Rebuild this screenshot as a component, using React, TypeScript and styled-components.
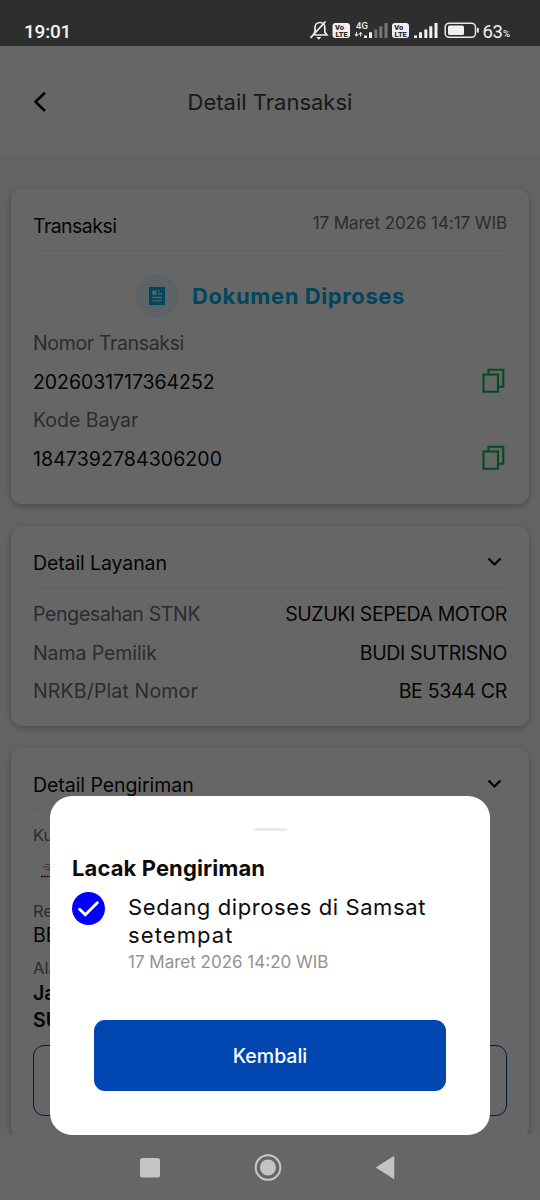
import React from "react";
import styled, { createGlobalStyle } from "styled-components";

const Global = createGlobalStyle`
  * { box-sizing: border-box; }
  body { margin: 0; background: #666; }
`;

const Screen = styled.div`
  position: relative;
  display: flex;
  flex-direction: column;
  width: 540px;
  height: 1200px;
  overflow: hidden;
  font-family: Inter, "Liberation Sans", sans-serif;
  color: #000;
`;

const StatusBar = styled.div`
  display: flex;
  align-items: center;
  justify-content: space-between;
  flex: none;
  height: 46px;
  padding: 14px 29px 0 24px;
  background: #2e2e2e;
  color: #f2f2f2;
  font-family: Roboto, sans-serif;
`;

const Clock = styled.span`
  padding-top: 3px;
  font-size: 19px;
  font-weight: 500;
  line-height: 30px;
  letter-spacing: -0.2px;
`;

const AppArea = styled.div`
  position: relative;
  flex: none;
  display: flex;
  flex-direction: column;
  height: 1089px;
  overflow: hidden;
  background: #f8f8f8;
`;

const Header = styled.header`
  display: grid;
  grid-template-columns: 40px 1fr 40px;
  align-items: center;
  flex: none;
  height: 109px;
  padding: 2px 20px 0;
  background: #fff;
  text-align: center;
`;

const Content = styled.main`
  display: flex;
  flex-direction: column;
  flex: none;
  gap: 22px;
  padding: 34px 11px 0;
`;

const Card = styled.section<{ $height: number }>`
  flex: none;
  height: ${(p) => p.$height}px;
  padding: 0 22px;
  border-radius: 11px;
  background: #fff;
  box-shadow: 0 2px 6px rgba(0, 0, 0, 0.26);
`;

const CardHead = styled.div`
  display: flex;
  align-items: center;
  justify-content: space-between;
  height: 62px;
  padding-top: 13px;
  border-bottom: 1px solid #ebebeb;

  svg {
    margin-bottom: 2px;
  }
`;

const DateText = styled.span`
  padding-bottom: 6px;
  font-size: 17px;
  line-height: 26px;
  letter-spacing: -0.07px;
  color: #6c6e75;
`;

const Row = styled.div`
  display: flex;
  align-items: center;
  justify-content: space-between;
  height: 38.5px;

  svg {
    margin-bottom: 2px;
  }
`;

const Status = styled.div`
  display: flex;
  align-items: center;
  justify-content: center;
  gap: 13px;
  height: 73px;
  padding-top: 16px;
`;

const StatusIcon = styled.span`
  display: grid;
  place-items: center;
  width: 44px;
  height: 44px;
  border-radius: 50%;
  background: #e6f4fc;
`;

const Rows = styled.div`
  padding-top: 7px;
`;

const Text = styled.span<{ $size?: number; $ls?: number; $weight?: number; $color?: string; $lh?: number }>`
  font-size: ${(p) => p.$size ?? 19.5}px;
  font-weight: ${(p) => p.$weight ?? 400};
  letter-spacing: ${(p) => p.$ls ?? 0}px;
  color: ${(p) => p.$color ?? "#0c0c0c"};
  line-height: ${(p) => p.$lh ?? 26}px;
  white-space: nowrap;
`;

const Delivery = styled.div`
  display: flex;
  flex-direction: column;
  align-items: flex-start;
  padding-top: 12px;
`;

const Courier = styled.div`
  height: 51px;
  padding: 13px 0 0 7px;
`;

const AddressLabel = styled.span`
  margin-top: 9px;
  font-size: 16.5px;
  line-height: 24px;
  color: #6c6e75;
`;

const OutlineButton = styled.div`
  align-self: stretch;
  height: 71px;
  margin-top: 11px;
  border: 1.5px solid #0046b0;
  border-radius: 11px;
`;

const Overlay = styled.div`
  position: absolute;
  inset: 0;
  display: flex;
  align-items: flex-end;
  justify-content: center;
  background: rgba(0, 0, 0, 0.6);
`;

const Sheet = styled.div`
  display: flex;
  flex-direction: column;
  width: 440px;
  height: 339px;
  padding: 32px 22px 0;
  border-radius: 22px;
  background: #fff;
`;

const Handle = styled.span`
  align-self: center;
  width: 33px;
  height: 3px;
  margin-bottom: 23px;
  border-radius: 1px;
  background: #ebebeb;
`;

const Step = styled.div`
  display: flex;
  align-items: flex-start;
  gap: 23px;
  margin-top: 10px;
`;

const StepText = styled.div`
  display: flex;
  flex-direction: column;
  padding-top: 2px;
`;

const PrimaryButton = styled.button`
  height: 71px;
  margin: 44px 22px 0;
  border: 0;
  border-radius: 11px;
  background: #0046b0;
  font-family: inherit;
`;

const NavBar = styled.nav`
  display: flex;
  align-items: center;
  flex: 1;
  background: #666;
`;

const muted = "#6c6e75";

const BackIcon = () => (
  <svg width="40" height="24" viewBox="0 0 40 24" fill="none" stroke="#000" strokeWidth="2.6">
    <path d="M25 2.800 15.500 11.800l9.500 9.200" strokeLinejoin="round" />
  </svg>
);

const Chevron = () => (
  <svg width="26" height="20" viewBox="0 0 26 20" fill="none" stroke="#000" strokeWidth="2.200">
    <path d="m7.500 6.500 6 6 6-6" />
  </svg>
);

const CopyIcon = () => (
  <svg width="26" height="26" viewBox="0 0 26 26" fill="none" stroke="#0cba5a" strokeWidth="2.100">
    <path d="M2.500 6.500h14.500v17.300h-14.500z" />
    <path d="M7.500 6.500V1.700h14.800v17h-5.300" />
  </svg>
);

const DocIcon = () => (
  <svg width="18" height="20" viewBox="0 0 18 20">
    <path fill="#00b0e6" d="M1 1h16v18H1z" />
    <path fill="#e6f4fc" d="M4.300 4.500h4.200v4.200H4.300zM10 4.500h1.500v1.500H10zM10 7.300h4v1.400h-4zM4.300 10.800h9.500v1.400H4.300zM4.300 14.200h9.500v1.400H4.300z" />
  </svg>
);

const CheckIcon = () => (
  <svg width="33" height="33" viewBox="0 0 33 33">
    <circle cx="16.500" cy="16.500" r="16.500" fill="#0000ff" />
    <path d="m7.600 17.300 5.700 5.500L25.300 10.800" fill="none" stroke="#fff" strokeWidth="2.900" strokeLinecap="round" />
  </svg>
);

const CourierLogo = () => (
  <svg width="40" height="18" viewBox="0 0 40 18">
    <path d="M2 6h10M5 3.500h7M5 8.500h7" stroke="#e8643a" strokeWidth="0.900" />
    <path d="M10 1.500h8L16 5h-6zM9 6.500h8l-2 3.500H9z" fill="#e8643a" />
    <path d="M1 15.500h24" stroke="#333" strokeWidth="1.600" strokeDasharray="2 .6" />
  </svg>
);

const StatusIcons = () => (
  <svg width="202" height="24" viewBox="308 18 202 24" fill="#f0f0f0" fontFamily="Roboto, sans-serif">
    <g fill="none" stroke="#f0f0f0" strokeWidth="1.700">
      <path d="M313.500 35h12.500l-2.200-2.800v-4.700c0-3-2-5-4.600-5-3 0-5.200 2-5.200 5v4.500l-1.500 2.200M309.500 37.800 324.500 21.500" />
    </g>
    <path d="M315.300 37h5l-2.500 2.800z" />
    <rect x="331.500" y="23" width="17.500" height="15" rx="3" />
    <rect x="391" y="23" width="17" height="15" rx="3" />
    <g fill="#2e2e2e" fontSize="7.500" fontWeight="900" textAnchor="middle">
      <text x="338.500" y="29.900">Vo</text>
      <text x="340.500" y="36.600">LTE</text>
      <text x="397.800" y="29.900">Vo</text>
      <text x="399.700" y="36.600">LTE</text>
    </g>
    <text x="355" y="29" fontSize="9.500" fontWeight="500">4G</text>
    <path d="M355.500 31.800v4M353.800 34l1.700 2.300 1.700-2.300M359.600 36.500v-4M357.900 34.600l1.700-2.300 1.700 2.300" fill="none" stroke="#f0f0f0" strokeWidth="1" />
    <path d="M363 35.500h3V38h-3zM368 32.300h3V38h-3zM413 35.500h3V38h-3zM418 32.300h3V38h-3zM423.300 29.500h3V38h-3zM428.300 26.300h3V38h-3zM433.500 23h3v15h-3z" />
    <path fill="#777" d="M373.300 29.500h3V38h-3zM378.300 26.300h3V38h-3zM383.500 23h3v15h-3z" />
    <rect x="444.200" y="23.200" width="30.300" height="14.100" rx="4" fill="none" stroke="#e8e8e8" strokeWidth="1.500" />
    <rect x="447" y="25.500" width="16" height="9.500" rx="1.500" />
    <path d="M476 28h1.800v4.500H476z" />
    <text x="481.500" y="37.500" fontSize="18.500" textLength="20.500">63</text>
    <text x="502" y="37" fontSize="9.500" fontWeight="500">%</text>
  </svg>
);

const NavIcons = () => (
  <svg width="540" height="66" viewBox="0 1135 540 66" fill="#c4c4c4">
    <rect x="140" y="1158" width="20" height="19.500" rx="2.500" />
    <circle cx="268" cy="1167.500" r="12.300" fill="none" stroke="#c8c8c8" strokeWidth="2" />
    <circle cx="268" cy="1167.500" r="8" />
    <path d="M376.500 1167.500 393.800 1156.500v22z" stroke="#c4c4c4" strokeWidth="1" strokeLinejoin="round" />
  </svg>
);

const details = [
  { label: "Pengesahan STNK", ls: -0.33, value: "SUZUKI SEPEDA MOTOR", vls: -0.42 },
  { label: "Nama Pemilik", ls: -0.08, value: "BUDI SUTRISNO", vls: -0.33 },
  { label: "NRKB/Plat Nomor", ls: 0.15, value: "BE 5344 CR", vls: -0.3 },
];

export default function App() {
  return (
    <Screen>
      <Global />
      <StatusBar>
        <Clock>19:01</Clock>
        <StatusIcons />
      </StatusBar>
      <AppArea>
        <Header>
          <BackIcon />
          <Text $size={22} $color="#404040">Detail Transaksi</Text>
        </Header>
        <Content>
          <Card $height={315}>
            <CardHead>
              <Text $ls={-0.55}>Transaksi</Text>
              <DateText>17 Maret 2026 14:17 WIB</DateText>
            </CardHead>
            <Status>
              <StatusIcon><DocIcon /></StatusIcon>
              <Text $size={22} $weight={700} $ls={0.6} $color="#00aee6">Dokumen Diproses</Text>
            </Status>
            <Row><Text $color={muted} $ls={-0.35}>Nomor Transaksi</Text></Row>
            <Row><Text $ls={-0.06}>2026031717364252</Text><CopyIcon /></Row>
            <Row><Text $color={muted}>Kode Bayar</Text></Row>
            <Row><Text $ls={0.09}>1847392784306200</Text><CopyIcon /></Row>
          </Card>
          <Card $height={200}>
            <CardHead>
              <Text $ls={-0.1}>Detail Layanan</Text>
              <Chevron />
            </CardHead>
            <Rows>
              {details.map((d) => (
                <Row key={d.label}>
                  <Text $color={muted} $ls={d.ls}>{d.label}</Text>
                  <Text $ls={d.vls}>{d.value}</Text>
                </Row>
              ))}
            </Rows>
          </Card>
          <Card $height={391}>
            <CardHead>
              <Text $ls={-0.06}>Detail Pengiriman</Text>
              <Chevron />
            </CardHead>
            <Delivery>
              <Text $size={16.5} $color={muted}>Kurir</Text>
              <Courier><CourierLogo /></Courier>
              <Text $size={16.5} $color={muted} $lh={24}>Resi</Text>
              <Text $lh={24}>BE</Text>
              <AddressLabel>Alamat</AddressLabel>
              <Text $weight={600} $lh={27}>Jalan</Text>
              <Text $weight={600} $lh={27}>SUKARAME</Text>
              <OutlineButton />
            </Delivery>
          </Card>
        </Content>
        <Overlay>
          <Sheet>
            <Handle />
            <Text $size={22} $weight={700} $ls={0.1} $lh={28}>Lacak Pengiriman</Text>
            <Step>
              <CheckIcon />
              <StepText>
                <Text $size={22} $ls={0.6} $lh={27.5}>Sedang diproses di Samsat</Text>
                <Text $size={22} $ls={1.1} $lh={27.5}>setempat</Text>
                <Text $size={17} $lh={27} $color="#929292">17 Maret 2026 14:20 WIB</Text>
              </StepText>
            </Step>
            <PrimaryButton><Text $color="#fff" $weight={500}>Kembali</Text></PrimaryButton>
          </Sheet>
        </Overlay>
      </AppArea>
      <NavBar><NavIcons /></NavBar>
    </Screen>
  );
}
